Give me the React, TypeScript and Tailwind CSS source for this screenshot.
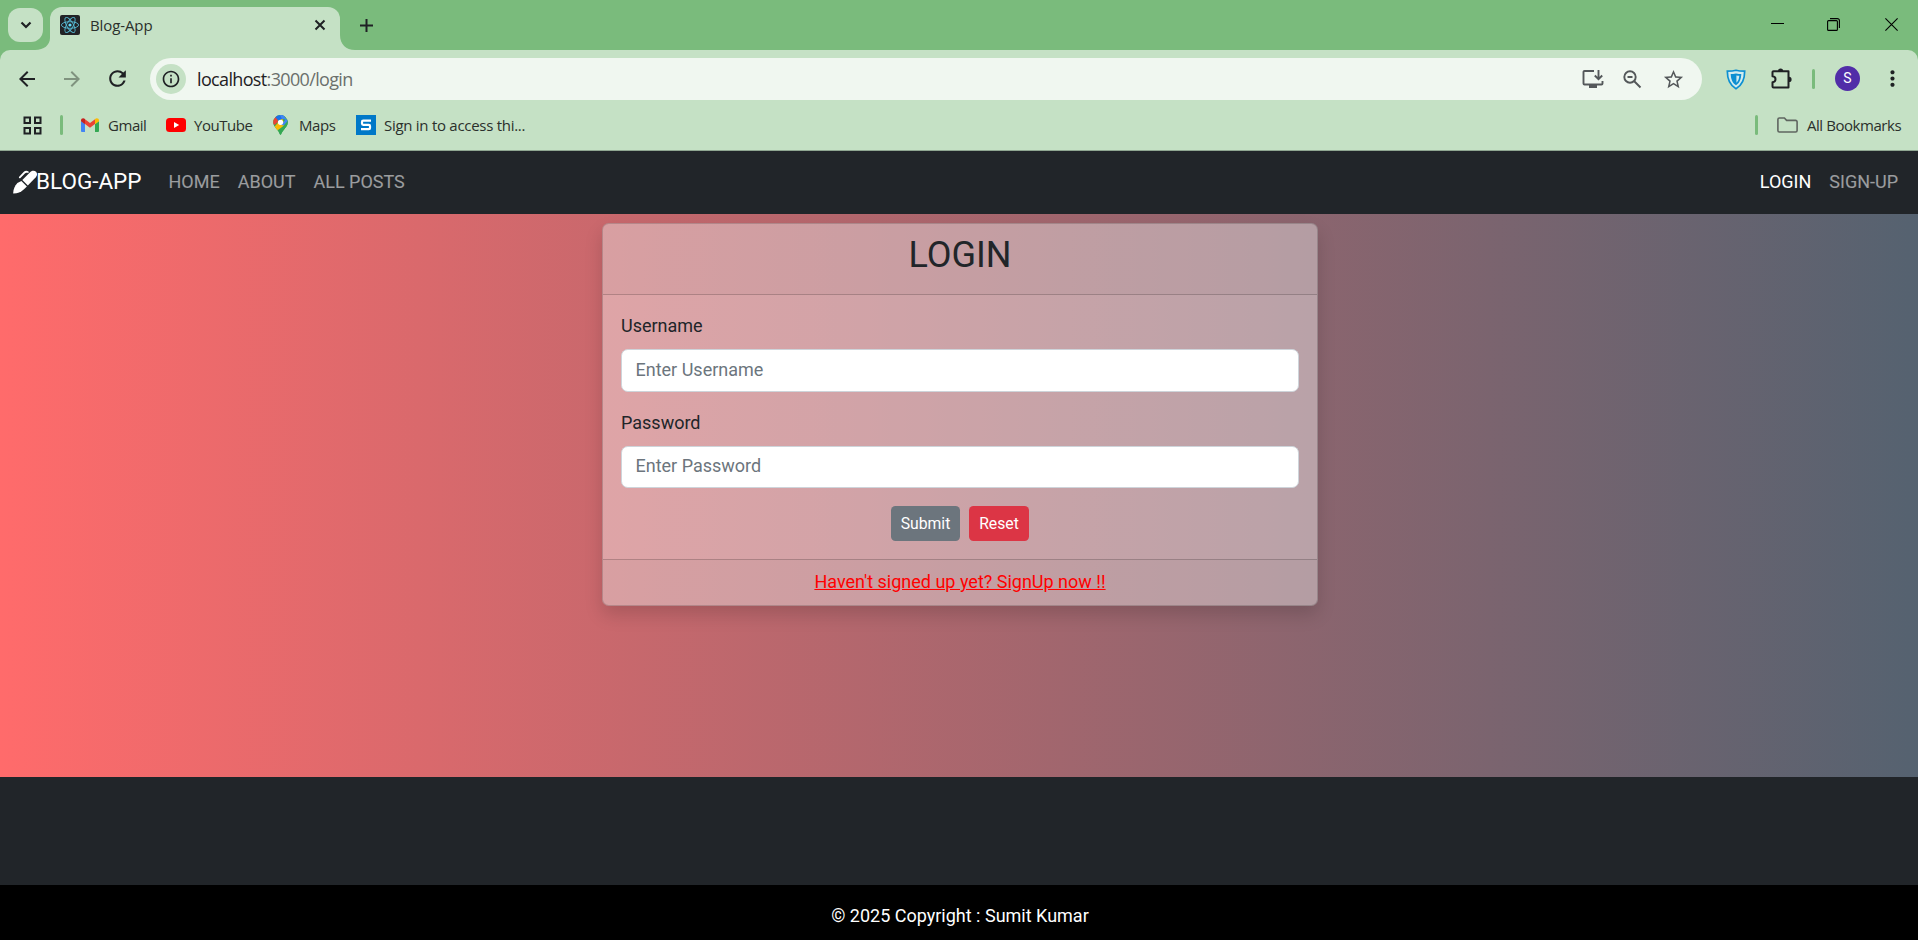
import type { ReactNode } from "react";
import {
  MdArrowBack,
  MdArrowForward,
  MdRefresh,
  MdInfoOutline,
  MdStarBorder,
  MdMoreVert,
} from "react-icons/md";

function ReactMark() {
  return (
    <svg className="h-5 w-5" viewBox="0 0 20 20">
      <rect width="20" height="20" rx="2" fill="#222326" />
      <g fill="none" stroke="#56b9d2" strokeWidth="0.9">
        <ellipse cx="10" cy="10" rx="8.6" ry="3.3" />
        <ellipse cx="10" cy="10" rx="8.6" ry="3.3" transform="rotate(60 10 10)" />
        <ellipse cx="10" cy="10" rx="8.6" ry="3.3" transform="rotate(120 10 10)" />
      </g>
      <circle cx="10" cy="10" r="1.6" fill="#61dafb" />
    </svg>
  );
}

function PenMark() {
  return (
    <svg className="h-6 w-6" viewBox="0 0 24 24" fill="#fff">
      <path d="M9.300 10 17.300 2C19.200.1 21.800.5 23 1.700c1.300 1.300 1.500 3.700-.2 5.500l-8 8.300Z" />
      <path d="m8.400 10.900 5.500 5.500-3.200 3.200C8 22.300 4.500 23.500.6 23.600c-.2 0-.4-.2-.4-.4.100-3.900 1.500-7.500 4.200-10.200Z" />
      <path d="m6.800 7.300 4.700-4.800c.9-.9 2-.9 3.400-.5" fill="none" stroke="#fff" strokeWidth="1.800" strokeLinecap="round" />
    </svg>
  );
}

function TabStrip() {
  return (
    <div className="flex h-[50px] items-start bg-[#7abb7c] pl-2">
      <button className="mt-2 flex h-[34px] w-[35px] items-center justify-center rounded-xl bg-[#c5e1c5]">
        <svg className="h-[10px] w-3" viewBox="0 0 12 10" fill="none" stroke="#1f2124" strokeWidth="2.2">
          <path d="M1.5 2.5 6 7l4.5-4.5" />
        </svg>
      </button>
      <svg className="mt-[38px] -ml-2 h-3 w-[15px]" viewBox="0 0 15 12">
        <path d="M15 0v12H0C9 12 15 7 15 0Z" fill="#c5e1c5" />
      </svg>
      <div className="mt-[7px] flex h-[43px] w-[290px] items-center rounded-t-xl bg-[#c5e1c5] pr-[14px] pb-[7px] pl-[10px]">
        <ReactMark />
        <span className="ml-[10px] text-[15px] tracking-[-0.1px] text-[#2b302c]">Blog-App</span>
        <svg className="ml-auto h-3 w-3" viewBox="0 0 12 12" stroke="#1f2124" strokeWidth="2">
          <path d="m1.5 1.5 9 9m0-9-9 9" />
        </svg>
      </div>
      <svg className="mt-[35px] h-[15px] w-[15px]" viewBox="0 0 15 15">
        <path d="M0 0v15h15C6 15 0 9 0 0Z" fill="#c5e1c5" />
      </svg>
      <svg className="mt-[19px] ml-[5px] h-[13px] w-[13px]" viewBox="0 0 13 13" stroke="#1f2124" strokeWidth="2">
        <path d="M6.5 0v13M0 6.5h13" />
      </svg>
      <div className="mt-[18px] mr-[20px] ml-auto flex items-start text-black">
        <svg className="mt-[5px] h-[2px] w-[13px]" viewBox="0 0 13 2">
          <path d="M0 .5h13" stroke="currentColor" strokeWidth="1" />
        </svg>
        <svg className="ml-[43px] h-[13px] w-[13px]" viewBox="0 0 13 13" fill="none" stroke="currentColor" strokeWidth="1.1">
          <rect x=".6" y="2.6" width="9.8" height="9.8" rx="1" />
          <path d="M3 .6h7.400a2 2 0 0 1 2 2V10" />
        </svg>
        <svg className="ml-[45px] h-[13px] w-[13px]" viewBox="0 0 13 13" stroke="currentColor" strokeWidth="1.1">
          <path d="m.4.4 12.200 12.200M12.600.4.4 12.600" />
        </svg>
      </div>
    </div>
  );
}

function AddressRow() {
  return (
    <div className="flex h-[50px] items-start pt-2">
      <MdArrowBack className="mt-[9px] ml-[15px] h-6 w-6 text-[#1f2124]" />
      <MdArrowForward className="mt-[9px] ml-[21px] h-6 w-6 text-[#80937f]" />
      <MdRefresh className="mt-[8px] ml-[21px] h-[25px] w-[25px] text-[#1f2124]" />
      <div className="ml-[20px] flex h-[42px] w-[1552px] items-center rounded-full bg-[#f0f7f0] pr-[17px] pl-[6px]">
        <span className="flex h-[30px] w-[30px] items-center justify-center rounded-full bg-[#c5e1c5]">
          <MdInfoOutline className="h-[20px] w-[20px] text-[#1f2124]" />
        </span>
        <span className="ml-[11px] text-[18px] tracking-[-0.65px] text-[#1f2124]">
          localhost<span className="text-[#6b706c]">:3000/login</span>
        </span>
        <svg className="ml-auto h-[20px] w-[22px]" viewBox="0 0 22 20" fill="none" stroke="#54585a" strokeWidth="1.9">
          <path d="M12 2H2.500a1 1 0 0 0-1 1v11.500a1 1 0 0 0 1 1h17a1 1 0 0 0 1-1V12" />
          <path d="M16.500 1v9M12.800 6.500l3.700 3.700 3.700-3.700" />
          <path d="M7 17.500h8" strokeWidth="3" />
        </svg>
        <svg className="ml-[19px] h-[19px] w-[19px]" viewBox="0 0 19 19" fill="none" stroke="#54585a" strokeWidth="1.900">
          <circle cx="7" cy="7" r="5.700" />
          <path d="M4.500 7h5M11 11l6.500 6.500" />
        </svg>
        <MdStarBorder className="ml-[20px] h-[23px] w-[23px] text-[#54585a]" />
      </div>
      <svg className="mt-[11px] ml-[24px] h-[21px] w-[20px]" viewBox="0 0 20 21">
        <path d="M10 1.200C7 2 4 2.100 1.300 2.100 1.300 10 3 16 10 19.700c7-3.700 8.700-9.700 8.700-17.600C16 2.100 13 2 10 1.200Z" fill="#d3ecee" stroke="#0d8fd2" strokeWidth="1.700" />
        <path d="M10 4.400c-2 .4-3.700.6-5.300.6.200 5 1.500 8.700 5.300 11.300 3.800-2.600 5.100-6.300 5.300-11.300-1.600 0-3.300-.2-5.300-.6Z" fill="#0d8fd2" />
        <path d="M10.400 6.500c1 .2 1.900.3 2.900.3-.2 3-.9 5.300-2.900 7Z" fill="#d3ecee" />
      </svg>
      <svg className="mt-[10px] ml-[25px] h-[22px] w-[22px]" viewBox="0 0 22 22">
        <path d="M3 3.200h14.500v16.300H2.500a1 1 0 0 1-1-1v-4.200c4-.5 4-5.600 0-6V4.200a1 1 0 0 1 1-1Z" fill="none" stroke="#1f2124" strokeWidth="2" strokeLinejoin="round" />
        <path d="M7 3a2.600 2.600 0 0 1 5.200 0ZM18 8.800a2.600 2.600 0 0 1 0 5.200Z" fill="#1f2124" />
      </svg>
      <span className="mt-[11px] ml-[19px] h-[20px] w-[3px] rounded-sm bg-[#7abb7c]" />
      <span className="mt-2 ml-5 flex h-[25px] w-[25px] items-center justify-center rounded-full bg-[#512da8] font-[Roboto] text-[14px] text-white">
        S
      </span>
      <MdMoreVert className="mt-[8px] ml-[20px] h-[25px] w-[25px] text-[#1f2124]" />
    </div>
  );
}

function Bookmark({ className, icon, label }: { className: string; icon: ReactNode; label: string }) {
  return (
    <div className={"flex items-center " + className}>
      {icon}
      <span className="whitespace-nowrap text-[#2b302c]">{label}</span>
    </div>
  );
}

function BookmarksBar() {
  return (
    <div className="flex h-[51px] items-center border-b border-[#8fa691] text-[15px] tracking-[-0.45px]">
      <svg className="ml-[23px] h-[19px] w-[19px]" viewBox="0 0 19 19" fill="none" stroke="#1f2124" strokeWidth="2">
        <path d="M1.500 1.500h5.500V7H1.500zM12 1.500h5.500V7H12zM1.500 12h5.500v5.500H1.500zM12 12h5.500v5.500H12z" />
      </svg>
      <span className="ml-[18px] h-[20px] w-[3px] rounded-sm bg-[#7abb7c]" />
      <Bookmark
        className="ml-[18px] w-[85px] gap-[9px]"
        label="Gmail"
        icon={
          <svg className="h-[14px] w-[18px] shrink-0" viewBox="0 0 18 14">
            <path d="M0 3v9.700c0 .7.500 1.300 1.200 1.300H4V6Z" fill="#4285f4" />
            <path d="M18 3v9.700c0 .7-.5 1.300-1.200 1.300H14V6Z" fill="#34a853" />
            <path d="M4 1.200 9 5l5-3.800V6L9 9.800 4 6Z" fill="#ea4335" />
            <path d="M0 2.500C0 .3 2.300-.5 4 1v5.200L0 3.200Z" fill="#c5221f" />
            <path d="M18 2.500c0-2.200-2.300-3-4-1.500v5.200l4-3Z" fill="#fbbc04" />
          </svg>
        }
      />
      <Bookmark
        className="w-[107px] gap-2"
        label="YouTube"
        icon={
          <svg className="h-[14px] w-5 shrink-0" viewBox="0 0 20 14">
            <rect width="20" height="14" rx="3.500" fill="#f00" />
            <path d="m8 4 5.200 3L8 10Z" fill="#fff" />
          </svg>
        }
      />
      <Bookmark
        className="w-[83px] gap-[11px]"
        label="Maps"
        icon={
          <svg className="h-[20px] w-[15px] shrink-0" viewBox="0 0 15 20">
            <defs>
              <clipPath id="pin">
                <path d="M7.500 0A7.300 7.300 0 0 0 .2 7.300c0 3 1.600 4.600 3.500 6.900C5.500 16.400 6.300 17.400 6.800 19.300c.3.900 1.100.9 1.400 0 .5-1.900 1.300-2.900 3.100-5.100 1.900-2.300 3.500-3.900 3.500-6.900A7.300 7.300 0 0 0 7.500 0Z" />
              </clipPath>
            </defs>
            <g clipPath="url(#pin)">
              <rect width="15" height="20" fill="#34a853" />
              <path d="m0 13.500 9-10.500 3 7-8.500 6Z" fill="#fbbc04" />
              <path d="M0 9V0h4L5 7 1.500 10Z" fill="#ea4335" />
              <path d="M2 2 6 6l6-4.500L10 0H4Z" fill="#1a73e8" />
              <path d="M15 6 10 0h-3l2 4 3.500.5L8 10l4 .5L15 7Z" fill="#4285f4" />
              <path d="M15 5.500 3.500 19H15Z" fill="#34a853" />
            </g>
            <circle cx="7.500" cy="7.300" r="2.600" fill="#fff" />
          </svg>
        }
      />
      <Bookmark
        className="gap-2 tracking-[-0.28px]"
        label="Sign in to access thi..."
        icon={
          <svg className="h-5 w-5 shrink-0" viewBox="0 0 20 20">
            <rect width="20" height="20" fill="#0078c8" />
            <path d="M15 5.700H7.200a1.200 1.200 0 0 0-1.200 1.200v1.700a1.200 1.200 0 0 0 1.200 1.200h5.600A1.200 1.200 0 0 1 14 11v2a1.200 1.200 0 0 1-1.200 1.200H5" fill="none" stroke="#fff" strokeWidth="2.200" />
          </svg>
        }
      />
      <span className="ml-auto h-5 w-[3px] rounded-sm bg-[#7abb7c]" />
      <Bookmark
        className="ml-[19px] w-[141px] gap-[9px]"
        label="All Bookmarks"
        icon={
          <svg className="h-4 w-[21px] shrink-0" viewBox="0 0 21 16" fill="none" stroke="#5f6560" strokeWidth="1.600">
            <path d="M.9 2.500A1.500 1.500 0 0 1 2.400 1h5l2.200 2.400h9A1.500 1.500 0 0 1 20.100 5v8.500a1.500 1.500 0 0 1-1.500 1.500H2.400a1.500 1.500 0 0 1-1.500-1.500Z" />
          </svg>
        }
      />
    </div>
  );
}

function Field({ id, label, type, placeholder }: { id: string; label: string; type: string; placeholder: string }) {
  return (
    <div className="mb-[18px]">
      <label htmlFor={id} className="mb-[10px] block leading-[26px]">
        {label}
      </label>
      <input
        id={id}
        type={type}
        placeholder={placeholder}
        className="block h-[42.5px] w-full rounded-[6.75px] border border-[#ced4da] bg-white px-[13.5px] pb-[2px] placeholder:text-[#6c757d]"
      />
    </div>
  );
}

export default function App() {
  return (
    <div className="flex h-[940px] w-full flex-col overflow-hidden bg-[#212529]">
      <header className="h-[151px] shrink-0 bg-[#7abb7c] font-['Open_Sans',sans-serif]">
        <TabStrip />
        <div className="rounded-t-[10px] bg-[#c5e1c5]">
          <AddressRow />
          <BookmarksBar />
        </div>
      </header>
      <div className="flex min-h-0 flex-1 flex-col font-[Roboto,sans-serif] text-[18px] text-[#212529]">
        <nav className="flex h-[63px] shrink-0 items-center bg-[#212529] pr-[20px] pb-[2px] pl-[13px] text-white/55">
          <a className="flex items-center text-[22.5px] text-white">
            <PenMark />
            <span className="-ml-px">BLOG-APP</span>
          </a>
          <div className="ml-[27px] flex gap-[18px]">
            <a>HOME</a>
            <a>ABOUT</a>
            <a>ALL POSTS</a>
          </div>
          <div className="ml-auto flex gap-[18px]">
            <a className="text-white">LOGIN</a>
            <a>SIGN-UP</a>
          </div>
        </nav>
        <main className="flex h-[563px] shrink-0 items-start justify-center bg-linear-to-r/srgb from-[#ff6b6b] to-[#556270] pt-[9px] pl-[2px]">
          <section className="w-[716px] overflow-hidden rounded-[6.75px] border border-black/18 bg-white/40 shadow-[0_9px_18px_rgba(0,0,0,0.15)]">
            <div className="h-[71px] border-b border-black/18 bg-[#212529]/3 pt-[9px] text-center">
              <h2 className="text-[36px] leading-[45px]">LOGIN</h2>
            </div>
            <form className="p-[18px]">
              <Field id="username" label="Username" type="text" placeholder="Enter Username" />
              <Field id="password" label="Password" type="password" placeholder="Enter Password" />
              <div className="flex justify-center gap-[9px] text-[15.75px] text-white">
                <button type="button" className="h-[35px] w-[69px] rounded-[4.5px] bg-[#6c757d]">
                  Submit
                </button>
                <button type="button" className="h-[35px] w-[60px] rounded-[4.5px] bg-[#dc3545]">
                  Reset
                </button>
              </div>
            </form>
            <div className="h-[46px] border-t border-black/18 bg-[#212529]/3 pt-[9px] text-center leading-[25px]">
              <a className="text-[#ff0000] underline">Haven't signed up yet? SignUp now !!</a>
            </div>
          </section>
        </main>
        <footer className="mt-auto flex h-[55px] shrink-0 items-center justify-center bg-black pt-[6px] pl-[2px] text-white">
          © 2025 Copyright : Sumit Kumar
        </footer>
      </div>
    </div>
  );
}
